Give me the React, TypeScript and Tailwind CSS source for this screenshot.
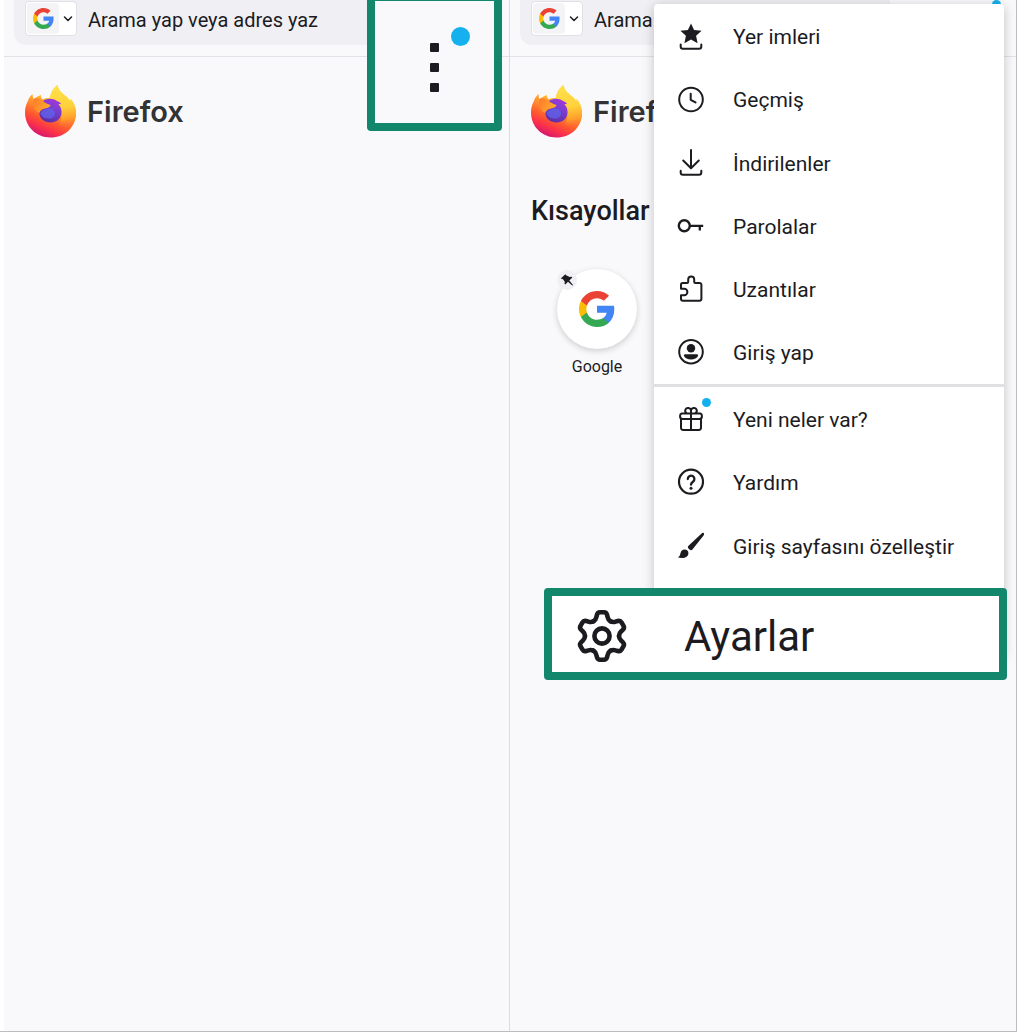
import React from "react";

type IconProps = { children: React.ReactNode };

function Icon({ children }: IconProps) {
  return (
    <svg viewBox="0 0 28 28" className="size-7 shrink-0" fill="none" stroke="#1c1b1f" strokeWidth="2" strokeLinecap="round" strokeLinejoin="round" aria-hidden="true">
      {children}
    </svg>
  );
}

const BookmarkIcon = () => (
  <Icon>
    <path d="M14 0.500l3.100 6.400 7.500.9-5.500 5 1.500 7.400-6.600-3.600-6.600 3.600 1.500-7.400-5.500-5 7.500-.9z" fill="#1c1b1f" stroke="none" />
    <path d="M3.700 21.500v2a2.200 2.200 0 0 0 2.200 2.200h16.200a2.200 2.200 0 0 0 2.200-2.200v-2" />
  </Icon>
);

const HistoryIcon = () => (
  <Icon>
    <circle cx="14" cy="13.500" r="11.800" />
    <path d="M13.700 7.800v6l4.800 2.600" />
  </Icon>
);

const DownloadIcon = () => (
  <Icon>
    <path d="M14 1v18M6.200 11.500l7.800 7.700 7.800-7.700M3.700 21.800v1.700a2.200 2.200 0 0 0 2.200 2.200h16.200a2.200 2.200 0 0 0 2.200-2.200v-1.700" />
  </Icon>
);

const KeyIcon = () => (
  <Icon>
    <circle cx="7.300" cy="13.800" r="5.500" strokeWidth="2.400" />
    <path d="M13 13.800h13.200M22.800 13.800v4.800" strokeWidth="2.300" strokeLinecap="butt" />
  </Icon>
);

const ExtensionIcon = () => (
  <Icon>
    <path d="M5.800 8h4.200a1.200 1.200 0 0 0 1.200-1.200V4.500a3 3 0 0 1 6 0v2.300A1.200 1.200 0 0 0 18.400 8h4.200a1.800 1.800 0 0 1 1.800 1.800v14a2 2 0 0 1-2 2H6a2 2 0 0 1-2-2v-3.600h3.200a3.200 3.200 0 0 0 0-6.400H4V9.800A1.800 1.800 0 0 1 5.800 8z" />
  </Icon>
);

const AccountIcon = () => (
  <Icon>
    <circle cx="14" cy="13.700" r="11.800" />
    <circle cx="14" cy="10.200" r="4.200" fill="#1c1b1f" stroke="none" />
    <path d="M8.200 16.300h11.600a1.200 1.200 0 0 1 1.200 1.700c-1 2.300-3.600 3.500-7 3.500s-6-1.200-7-3.500a1.200 1.200 0 0 1 1.200-1.700z" fill="#1c1b1f" stroke="none" />
  </Icon>
);

const GiftIcon = () => (
  <Icon>
    <path d="M4.600 8.500h18.800a2.300 2.300 0 0 1 1.500 2.300v.8a2.500 2.500 0 0 1-2.500 2.400H5.600a2.500 2.500 0 0 1-2.500-2.400v-.8a2.300 2.300 0 0 1 1.500-2.300zM4 14v8.800A2.300 2.300 0 0 0 6.300 25h15.400a2.300 2.300 0 0 0 2.300-2.200V14M14 5.500V25M14 8.500H10a2.900 2.900 0 1 1 4-2.700 2.900 2.900 0 1 1 4 2.700z" strokeWidth="2" />
  </Icon>
);

const HelpIcon = () => (
  <Icon>
    <circle cx="14" cy="13.700" r="12" strokeWidth="2.200" />
    <path d="M10.800 11a3.300 3.300 0 1 1 5.200 2.700c-1.300.9-2 1.400-2 3" strokeWidth="2.300" />
    <circle cx="14" cy="20.200" r="1.500" fill="#1c1b1f" stroke="none" />
  </Icon>
);

const BrushIcon = () => (
  <Icon>
    <path d="M11.500 13.800L24.600 1.400c.8-.7 1.700-.7 2.200-.1.500.6.400 1.400-.2 2.200L15.400 17.600c-.8.800-1.800.8-2.800 0l-.9-.8c-1.100-1-1.100-2.100-.2-3z" fill="#1c1b1f" stroke="none" />
    <path d="M7.600 17.600c2.300 0 3.800 1.400 3.800 3.300 0 3.200-2.700 5.100-6.600 5.100-1.700 0-3-.2-4-.7 1.600-.8 2.100-1.700 2.600-3.900.5-2.400 2-3.800 4.200-3.800z" fill="#1c1b1f" stroke="none" />
  </Icon>
);

const TOOTH = "M-8.500 -14.700C-6.800 -15.700 -6 -17 -5.600 -19L-5.100 -21Q-4.400 -23.700 -2 -23.700H2Q4.400 -23.700 5.100 -21L5.600 -19C6 -17 6.800 -15.700 8.500 -14.700";

const GearIcon = () => (
  <svg viewBox="-26 -26 52 52" className="size-[52px] shrink-0" fill="none" stroke="#1c1b1f" strokeWidth="4.600" strokeLinecap="round" aria-hidden="true">
    {[0, 60, 120, 180, 240, 300].map((a) => (
      <path key={a} d={TOOTH} transform={`rotate(${a})`} />
    ))}
    <circle r="7.600" />
  </svg>
);

function GoogleG({ className }: { className: string }) {
  return (
    <svg viewBox="2 2 44 44" className={className} aria-hidden="true">
      <path fill="#4285F4" d="M45.120 24.500c0-1.560-.14-3.060-.4-4.500H24v8.510h11.840c-.51 2.750-2.060 5.080-4.390 6.640v5.520h7.110c4.160-3.830 6.560-9.470 6.560-16.170z" />
      <path fill="#34A853" d="M24 46c5.940 0 10.920-1.970 14.560-5.330l-7.110-5.520c-1.970 1.320-4.490 2.100-7.450 2.100-5.730 0-10.580-3.870-12.310-9.070H4.340v5.700C7.960 41.070 15.400 46 24 46z" />
      <path fill="#FBBC05" d="M11.690 28.180C11.250 26.860 11 25.450 11 24s.25-2.860.69-4.180v-5.700H4.340C2.850 17.090 2 20.450 2 24c0 3.550.85 6.910 2.340 9.880l7.350-5.700z" />
      <path fill="#EA4335" d="M24 10.750c3.230 0 6.130 1.110 8.410 3.290l6.310-6.310C34.910 4.180 29.930 2 24 2 15.400 2 7.960 6.930 4.340 14.120l7.350 5.700c1.730-5.200 6.580-9.070 12.310-9.070z" />
    </svg>
  );
}

function FirefoxLogo({ id }: { id: string }) {
  const body = `${id}-body`;
  const flame = `${id}-flame`;
  const globe = `${id}-globe`;
  const snout = `${id}-snout`;
  return (
    <svg viewBox="0 0 53 54" className="h-[54px] w-[53px] shrink-0" aria-hidden="true">
      <defs>
        <linearGradient id={body} x1="0.800" y1="0.100" x2="0.400" y2="1">
          <stop offset="0.150" stopColor="#ffd93b" />
          <stop offset="0.450" stopColor="#ff972e" />
          <stop offset="0.680" stopColor="#ff5a2e" />
          <stop offset="0.850" stopColor="#fb2f4c" />
          <stop offset="1" stopColor="#d61a6c" />
        </linearGradient>
        <linearGradient id={flame} x1="0.300" y1="0" x2="0.400" y2="1">
          <stop offset="0" stopColor="#ffe14a" />
          <stop offset="0.500" stopColor="#ffd23c" />
          <stop offset="0.780" stopColor="#ff9f2a" />
          <stop offset="1" stopColor="#ff4c3c" stopOpacity="0" />
        </linearGradient>
        <linearGradient id={globe} x1="0.800" y1="0" x2="0.400" y2="1">
          <stop offset="0" stopColor="#a934dd" />
          <stop offset="0.400" stopColor="#7d3fd2" />
          <stop offset="1" stopColor="#5c2ea6" />
        </linearGradient>
        <linearGradient id={snout} x1="0" y1="0" x2="1" y2="0.400">
          <stop offset="0" stopColor="#ff7a2c" />
          <stop offset="1" stopColor="#ffab2b" />
        </linearGradient>
      </defs>
      <path fill={`url(#${body})`} d="M8.600 10c0 2 .3 3.600 1.100 5 2-1.800 4-2.900 6.500-3.600.3-.2.400-.5.800-.7-.2 1.800.3 3.300 1.500 4.600 2.400-1 5-1.400 7.500-1.200C27 8 29 4.500 33.500 1c1 5.500 4.500 8.200 8.500 11.300 2 1.600 3.500 3.500 4.500 5.700v-3.300c3.800 4.300 5.500 9.300 5.500 14.300C52 43.500 40.800 53.500 26.500 53.500S1 42.700 1 28.500c0-4.300 1-8 2.900-11.500C4.600 14.300 6.300 12 8.600 10z" />
      <path fill={`url(#${flame})`} d="M25.500 14.300C27 8 29 4.500 33.500 1c1 5.500 4.500 8.200 8.500 11.300 2 1.600 3.500 3.500 4.500 5.700v-3.300c3.800 4.300 5.500 9.300 5.500 14.300 0 7-3 13-8 17l-9-6c3-4 4-14-1-19-3-3-5-5-8.500-6.700z" />
      <path fill={`url(#${globe})`} d="M18.500 17.500c3.500-3.300 10-3.800 14.500-.5 1.500.6 3 1.300 4.300 3.300-1-.3-2-.3-2.800 0 2.300 2.500 3.300 5 3 8.700-.4 5.600-5 9.500-10.800 9.500-6.300 0-11.400-4-11.400-9.800 0-4 1.500-8 3.200-11.200z" />
      <path fill="#5f62e8" opacity="0.800" d="M16.500 29c2-3 5-4 8-4.500 3-.5 6 1 6.500 4.500.3 3.500-3 6-7 5.500-4-.3-6.800-2.500-7.500-5.500z" />
      <path fill={`url(#${snout})`} d="M9.700 15c2.800-1.300 5.300-1 8.300 1.100 1.500 2.200 4.500 3.700 8.500 5-.3 2.200-3 2.800-5.500 3.400-2.700.7-4.800 1.800-5.700 4.500-5.500-2.500-7.300-8-5.600-14z" />
    </svg>
  );
}

function BrowserBar() {
  return (
    <header className="h-[57px] border-b border-[#e2e2e6]">
      <div className="mr-[126px] ml-[10px] flex h-[45px] items-start rounded-bl-xl bg-[#f0f0f4] pl-[11px]">
        <button type="button" aria-label="Arama motoru" className="mt-px flex h-[35px] w-[52px] shrink-0 items-center rounded-[4px] border border-[#e0e0e6] bg-white pl-px">
          <span className="flex h-[31px] w-[32px] items-center justify-center rounded-sm bg-[#f4f4f6]">
            <GoogleG className="size-[21px]" />
          </span>
          <svg viewBox="0 0 10 6" className="ml-1 h-[6px] w-[10px]" fill="none" stroke="#1c1b1f" strokeWidth="1.500" strokeLinecap="round" strokeLinejoin="round" aria-hidden="true">
            <path d="M1.500 1l3.500 3.500L8.500 1" />
          </svg>
        </button>
        <input type="text" aria-label="Adres" placeholder="Arama yap veya adres yaz" className="ml-[11px] h-10 min-w-0 flex-1 bg-transparent text-[20px] text-[#1c1b1f] outline-none placeholder:text-[#1c1b1f]" />
      </div>
    </header>
  );
}

function Brand({ id }: { id: string }) {
  return (
    <div className="mt-[27px] ml-5 flex items-center gap-[10px]">
      <FirefoxLogo id={id} />
      <span className="pt-0.5 font-['Inter'] text-[29px] leading-8 font-semibold text-[#333336]">Firefox</span>
    </div>
  );
}

type Item = { label: string; icon: React.ReactNode; badge?: boolean };

const mainItems: Item[] = [
  { label: "Yer imleri", icon: <BookmarkIcon /> },
  { label: "Geçmiş", icon: <HistoryIcon /> },
  { label: "İndirilenler", icon: <DownloadIcon /> },
  { label: "Parolalar", icon: <KeyIcon /> },
  { label: "Uzantılar", icon: <ExtensionIcon /> },
  { label: "Giriş yap", icon: <AccountIcon /> },
];

const moreItems: Item[] = [
  { label: "Yeni neler var?", icon: <GiftIcon />, badge: true },
  { label: "Yardım", icon: <HelpIcon /> },
  { label: "Giriş sayfasını özelleştir", icon: <BrushIcon /> },
];

function MenuItem({ label, icon, badge }: Item) {
  return (
    <button type="button" className="flex w-full items-center gap-7 pl-[23px] text-left text-[21px] text-[#1c1b1f]">
      <span className="relative">
        {icon}
        {badge && <span className="absolute -top-[7px] -right-[6px] size-[9px] rounded-full bg-[#15b0ee]" />}
      </span>
      <span className="pt-[3px]">{label}</span>
    </button>
  );
}

export default function App() {
  return (
    <div className="grid min-h-screen grid-cols-2 overflow-hidden border-r border-b border-[#bdbdbf] bg-white pl-1 font-['Roboto',sans-serif]">
      <section className="relative border-r border-[#dcdce0] bg-[#f9f9fb]">
        <BrowserBar />
        <Brand id="fx-left" />
        <button type="button" aria-label="Menü" className="absolute -top-[7px] right-[7px] flex h-[138px] w-[135px] flex-col items-center justify-center gap-[11px] rounded-[4px] border-8 border-[#12876b] bg-[#f9f9fb] pt-[11px]">
          <span className="size-[9px] rounded-[1px] bg-[#1c1b1f]" />
          <span className="size-[9px] rounded-[1px] bg-[#1c1b1f]" />
          <span className="size-[9px] rounded-[1px] bg-[#1c1b1f]" />
          <span className="absolute top-[26px] right-6 size-[19px] rounded-full bg-[#15b0ee]" />
        </button>
      </section>

      <section className="relative bg-[#f9f9fb]">
        <BrowserBar />
        <Brand id="fx-right" />
        <span className="absolute top-0 right-[15px] h-2 w-[9px] rounded-t-full bg-[#15b0ee]" />

        <h2 className="mt-[55px] ml-[21px] text-[27px] leading-9 font-medium text-[#1c1b1f]">Kısayollar</h2>
        <a href="#google" className="relative mt-10 ml-[47px] flex w-20 flex-col items-center">
          <span className="flex size-20 items-center justify-center rounded-full bg-white shadow-[0_2px_6px_rgba(0,0,0,0.180)]">
            <GoogleG className="size-[36px]" />
          </span>
          <span className="absolute top-px left-0 flex size-5 items-center justify-center rounded-full bg-[#f0f0f4]">
            <svg viewBox="0 0 14 14" className="size-[14px]" fill="#1c1b1f" aria-hidden="true">
              <path d="M5.300 1.300l.8 1 3.600 1.800 1.900-.4.7.8-3 3 3.700 4.400-.8.700-4.200-3.800-2.700 2.700-.8-.8.300-1.900L3 6.300l-2.200-.7z" />
            </svg>
          </span>
          <span className="mt-[6px] text-[16px] leading-6 text-[#1c1b1f]">Google</span>
        </a>

        <nav aria-label="Menü" className="absolute top-1 right-3 w-[350px] rounded-[4px] bg-white pt-px shadow-[0_2px_12px_rgba(0,0,0,0.220)]">
          <div className="grid h-[379px] grid-rows-6">
            {mainItems.map((item) => <MenuItem key={item.label} {...item} />)}
          </div>
          <div className="h-[3px] bg-[#e0e0e3]" />
          <div className="grid h-[191px] grid-rows-3">
            {moreItems.map((item) => <MenuItem key={item.label} {...item} />)}
          </div>
          <button type="button" className="relative mt-[10px] -mr-[3px] -mb-6 -ml-[110px] flex h-[92px] w-[463px] items-center gap-14 rounded-[4px] border-8 border-[#12876b] bg-white pt-1 pl-6 text-[42px] text-[#1c1b1f]">
            <GearIcon />
            Ayarlar
          </button>
        </nav>
      </section>
    </div>
  );
}
